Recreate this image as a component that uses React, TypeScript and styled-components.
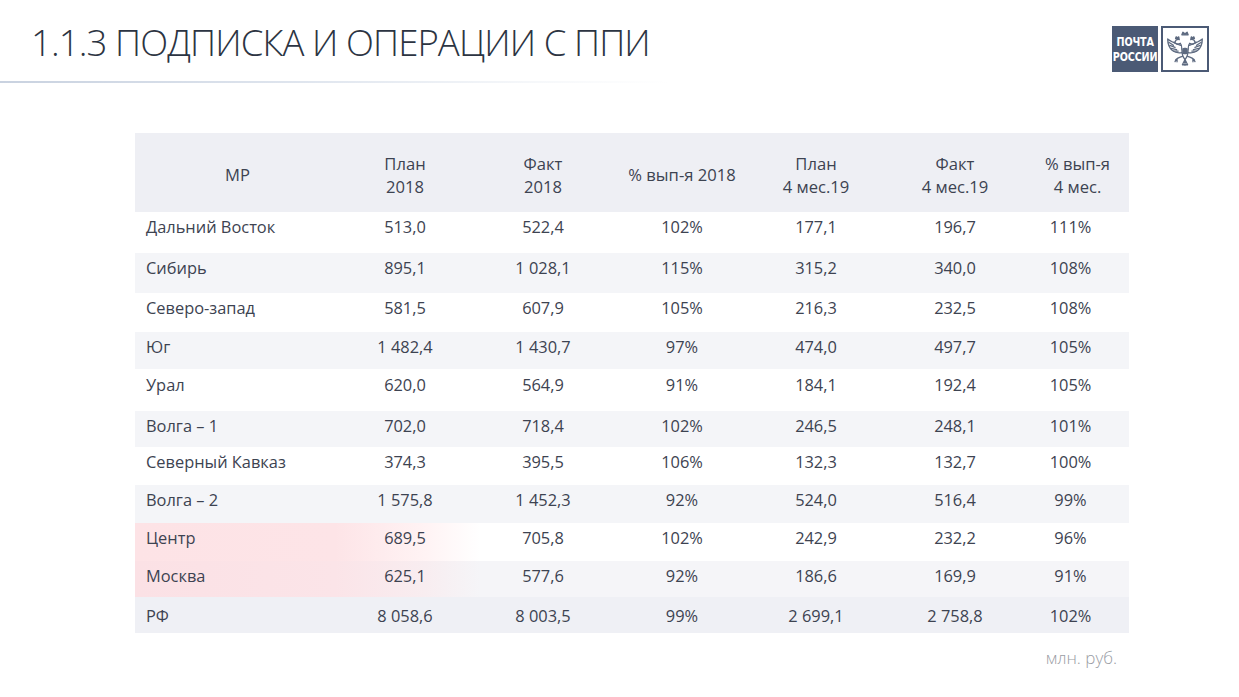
import React from 'react';
import styled, { createGlobalStyle } from 'styled-components';

const GlobalStyle = createGlobalStyle`
  html, body {
    margin: 0;
    padding: 0;
    background: #ffffff;
  }
  body {
    font-family: "Open Sans", "Noto Sans", sans-serif;
    color: #3d4351;
  }
`;

interface RowData {
  name: string;
  values: string[];
  h: number;
  top?: number;
  tone: 'white' | 'grey' | 'pink' | 'pinkGrey' | 'total';
}

const rows: RowData[] = [
  { name: 'Дальний Восток', values: ['513,0', '522,4', '102%', '177,1', '196,7', '111%'], h: 41, tone: 'white' },
  { name: 'Сибирь', values: ['895,1', '1 028,1', '115%', '315,2', '340,0', '108%'], h: 40, tone: 'grey' },
  { name: 'Северо-запад', values: ['581,5', '607,9', '105%', '216,3', '232,5', '108%'], h: 39, tone: 'white' },
  { name: 'Юг', values: ['1 482,4', '1 430,7', '97%', '474,0', '497,7', '105%'], h: 37, tone: 'grey' },
  { name: 'Урал', values: ['620,0', '564,9', '91%', '184,1', '192,4', '105%'], h: 42, top: 5, tone: 'white' },
  { name: 'Волга – 1', values: ['702,0', '718,4', '102%', '246,5', '248,1', '101%'], h: 36, tone: 'grey' },
  { name: 'Северный Кавказ', values: ['374,3', '395,5', '106%', '132,3', '132,7', '100%'], h: 38, tone: 'white' },
  { name: 'Волга – 2', values: ['1 575,8', '1 452,3', '92%', '524,0', '516,4', '99%'], h: 38, tone: 'grey' },
  { name: 'Центр', values: ['689,5', '705,8', '102%', '242,9', '232,2', '96%'], h: 38, tone: 'pink' },
  { name: 'Москва', values: ['625,1', '577,6', '92%', '186,6', '169,9', '91%'], h: 36, tone: 'pinkGrey' },
  { name: 'РФ', values: ['8 058,6', '8 003,5', '99%', '2 699,1', '2 758,8', '102%'], h: 36, top: 8, tone: 'total' },
];

const headers: string[][] = [
  ['МР'],
  ['План', '2018'],
  ['Факт', '2018'],
  ['% вып-я 2018'],
  ['План', '4 мес.19'],
  ['Факт', '4 мес.19'],
  ['% вып-я', '4 мес.'],
];

const COLS = '205px 130px 146px 132px 136px 142px 103px';

const backgrounds: Record<RowData['tone'], string> = {
  white: '#ffffff',
  grey: '#f4f5f8',
  pink: 'linear-gradient(90deg, #fde3e6 0px, #fde4e7 200px, #fff3f4 290px, #ffffff 345px)',
  pinkGrey: 'linear-gradient(90deg, #fbe1e5 0px, #fbe4e8 200px, #f8edf0 290px, #f5f5f8 345px)',
  total: '#eff0f5',
};

const Page = styled.div`
  width: 1239px;
  height: 697px;
  display: flex;
  flex-direction: column;
  overflow: hidden;
`;

const Header = styled.header`
  display: flex;
  justify-content: space-between;
  align-items: flex-start;
  height: 81px;
  padding: 0 30px 0 31px;
  box-sizing: border-box;
`;

const Title = styled.h1`
  margin: 17px 0 0;
  font-family: "Open Sans", "Noto Sans", sans-serif;
  font-weight: 300;
  font-size: 36.5px;
  letter-spacing: -0.9px;
  color: #2c3442;
  line-height: 50px;
`;

const Logo = styled.div`
  display: flex;
  gap: 3px;
  margin-top: 26px;
`;

const LogoText = styled.div`
  width: 46px;
  height: 46px;
  background: #4b5a75;
  color: #ffffff;
  font-family: "DejaVu Sans", sans-serif;
  font-weight: 700;
  font-size: 13px;
  line-height: 15px;
  display: flex;
  flex-direction: column;
  justify-content: center;
  align-items: center;
  letter-spacing: -0.2px;
`;

const LogoWord = styled.span`
  display: block;
  white-space: nowrap;
  transform: scaleX(0.74);
`;

const LogoEmblem = styled.div`
  width: 48px;
  height: 46px;
  box-sizing: border-box;
  border: 2px solid #4b5a75;
  background: #ffffff;
  display: flex;
  align-items: center;
  justify-content: center;
`;

const Rule = styled.div`
  width: 670px;
  height: 2px;
  background: linear-gradient(90deg, #c9d2e0 0%, #dfe5ee 45%, rgba(240, 243, 247, 0.6) 80%, rgba(255, 255, 255, 0) 100%);
`;

const Table = styled.div`
  width: 994px;
  margin: 50px 0 0 135px;
  display: flex;
  flex-direction: column;
`;

const HeadRow = styled.div`
  display: grid;
  grid-template-columns: ${COLS};
  height: 79px;
  align-items: center;
  background: #eeeff4;
`;

const HeadCell = styled.div`
  text-align: center;
  font-size: 16.6px;
  line-height: 23px;
  color: #3d4351;
  padding-top: 4px;
`;

const BodyRow = styled.div<{ $h: number; $top: number; $bg: string }>`
  display: grid;
  grid-template-columns: ${COLS};
  height: ${p => p.$h}px;
  padding-top: ${p => p.$top}px;
  box-sizing: border-box;
  background: ${p => p.$bg};
`;

const NameCell = styled.div`
  font-size: 16.4px;
  line-height: 22px;
  padding-left: 11px;
  white-space: nowrap;
`;

const ValueCell = styled.div<{ $last?: boolean }>`
  font-size: 16.4px;
  line-height: 22px;
  text-align: center;
  padding-right: ${p => (p.$last ? 14 : 0)}px;
  white-space: nowrap;
`;

const Note = styled.div`
  width: 1117px;
  margin-top: 13px;
  text-align: right;
  font-size: 17px;
  font-weight: 300;
  color: #9a9da4;
`;

const Eagle: React.FC = () => (
  <svg width="42" height="40" viewBox="0 0 40 38" fill="none" stroke="#5d6a80" strokeWidth="1.2" strokeLinecap="round" strokeLinejoin="round">
    {/* crowns */}
    <path d="M17 5.5 L18 3 L20 4.5 L22 3 L23 5.5 Z" fill="#5d6a80" />
    <path d="M11 9 L11.6 7.4 L12.8 8.2 L14 7.4 L14.4 9 Z" fill="#5d6a80" />
    <path d="M25.6 9 L26 7.4 L27.2 8.2 L28.4 7.4 L29 9 Z" fill="#5d6a80" />
    {/* heads */}
    <path d="M14.6 10 C12.5 9.6 11 10.6 10.6 12.2 L9.2 12.6 L10.8 13.4 C12 14.8 14 14.6 15.6 13.6" />
    <path d="M25.4 10 C27.5 9.6 29 10.6 29.4 12.2 L30.8 12.6 L29.2 13.4 C28 14.8 26 14.6 24.4 13.6" />
    {/* necks and body */}
    <path d="M15.6 13.6 C17 15 17 17 17 19 M24.4 13.6 C23 15 23 17 23 19" />
    <path d="M17 19 C17 24 18 27 20 29 C22 27 23 24 23 19" />
    <rect x="18" y="18.5" width="4" height="5" rx="1.2" fill="#5d6a80" />
    {/* left wing */}
    <path d="M16 15.5 C12 14 7 12.5 3.5 9.5 C3.5 14 5 18 8 20.5 C10.5 22.5 14 23 17 22.5" />
    <path d="M4.5 12.5 L9 15.5 M5.5 15.5 L10.5 17.5 M6.8 18.5 L12 19.5 M9 21 L13.5 21" />
    {/* right wing */}
    <path d="M24 15.5 C28 14 33 12.5 36.5 9.5 C36.5 14 35 18 32 20.5 C29.5 22.5 26 23 23 22.5" />
    <path d="M35.5 12.5 L31 15.5 M34.5 15.5 L29.5 17.5 M33.2 18.5 L28 19.5 M31 21 L26.5 21" />
    {/* legs */}
    <path d="M17.5 26 C15 27 13 27.5 11.5 29 M22.5 26 C25 27 27 27.5 28.5 29" />
    <path d="M11.5 29 L10.5 31 M12.5 29.2 L12.4 31.2 M28.5 29 L29.5 31 M27.5 29.2 L27.6 31.2" />
    {/* tail */}
    <path d="M20 29 L17.5 34 M20 29 L20 34.5 M20 29 L22.5 34 M17.5 34 L22.5 34" />
  </svg>
);

const App: React.FC = () => (
  <>
    <GlobalStyle />
    <Page>
      <Header>
        <Title>1.1.3 ПОДПИСКА И ОПЕРАЦИИ С ППИ</Title>
        <Logo>
          <LogoText>
            <LogoWord>ПОЧТА</LogoWord>
            <LogoWord>РОССИИ</LogoWord>
          </LogoText>
          <LogoEmblem>
            <Eagle />
          </LogoEmblem>
        </Logo>
      </Header>
      <Rule />
      <Table>
        <HeadRow>
          {headers.map((lines, i) => (
            <HeadCell key={i}>
              {lines.map((l, j) => (
                <div key={j}>{l}</div>
              ))}
            </HeadCell>
          ))}
        </HeadRow>
        {rows.map(r => (
          <BodyRow key={r.name} $h={r.h} $top={r.top ?? 4} $bg={backgrounds[r.tone]}>
            <NameCell>{r.name}</NameCell>
            {r.values.map((v, i) => (
              <ValueCell key={i} $last={i === r.values.length - 1}>
                {v}
              </ValueCell>
            ))}
          </BodyRow>
        ))}
      </Table>
      <Note>млн. руб.</Note>
    </Page>
  </>
);

export default App;
